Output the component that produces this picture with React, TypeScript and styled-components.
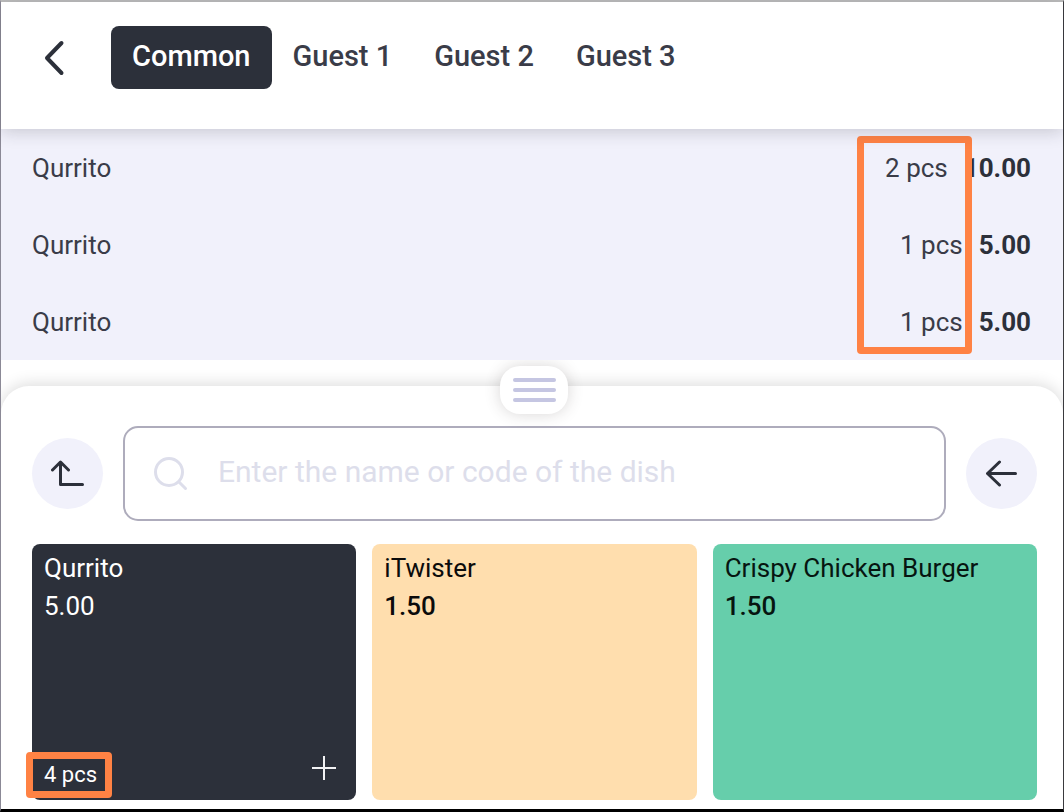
import React, { useState } from "react";
import styled, { createGlobalStyle } from "styled-components";

const ink = "#2c303a";
const softInk = "#3a3c48";
const lilac = "#f1f1fb";
const marker = "#ff8244";

const GlobalStyle = createGlobalStyle`
  *, *::before, *::after { box-sizing: border-box; }
  body { margin: 0; background: #fff; }
  body, button, input { font-family: Roboto, "Liberation Sans", sans-serif; }
  button { border: 0; padding: 0; background: none; color: inherit; cursor: pointer; }
`;

const Screen = styled.main`
  display: flex;
  flex-direction: column;
  min-height: 100vh;
  border-style: solid;
  border-width: 2px 1px 3px;
  border-color: #bdbdbd #3a3a3e #000 #8b8996;
  background: #fff;
  color: ${ink};
`;

const Header = styled.header`
  position: relative;
  z-index: 1;
  display: flex;
  align-items: flex-start;
  gap: 34px;
  height: 127px;
  padding: 24px 32px;
  background: #fff;
  box-shadow: 0 3px 16px rgba(40, 40, 50, 0.2);
`;

const BackButton = styled.button`
  display: grid;
  place-items: center;
  width: 44px;
  height: 63px;
`;

const Tabs = styled.nav`
  display: flex;
`;

const Tab = styled.button<{ $active: boolean }>`
  height: 63px;
  padding: 0 21px 4px;
  border-radius: 8px;
  background: ${(p) => (p.$active ? ink : "transparent")};
  color: ${(p) => (p.$active ? "#fff" : softInk)};
  font-size: 29px;
  font-weight: 500;
  line-height: 36px;
`;

const Order = styled.section`
  position: relative;
  background: ${lilac};
`;

const OrderTable = styled.table`
  width: 100%;
  border-collapse: collapse;
  color: ${softInk};
  font-size: 26px;
  line-height: 32px;
`;

const OrderRow = styled.tr`
  display: flex;
  align-items: center;
  gap: 16px;
  height: 77px;
  padding: 0 32px 0 31px;
`;

const Name = styled.td`
  flex: 1;
  padding: 0;
`;

const Quantity = styled.td`
  padding: 0;
`;

const Price = styled.td`
  padding: 0;
  color: ${ink};
  font-weight: 700;
`;

const OrderMarker = styled.div`
  position: absolute;
  top: 7px;
  right: 91px;
  bottom: 6px;
  width: 115px;
  border: 7px solid ${marker};
  border-radius: 4px;
  pointer-events: none;
`;

const Menu = styled.section`
  position: relative;
  flex: 1;
  display: flex;
  flex-direction: column;
  gap: 23px;
  margin-top: 26px;
  padding: 40px 26px 9px 31px;
  border-radius: 28px 28px 0 0;
  background: #fff;
  box-shadow: 0 -2px 16px rgba(0, 0, 0, 0.14);
  clip-path: inset(-26px 0 0 0);
`;

const Handle = styled.button`
  position: absolute;
  top: -20px;
  left: 50%;
  display: grid;
  place-content: center;
  gap: 6px;
  width: 68px;
  height: 48px;
  margin-left: -32px;
  border-radius: 20px;
  background: #fff;
  box-shadow: 0 0 16px rgba(60, 50, 50, 0.2);
`;

const Grip = styled.span`
  width: 43px;
  height: 4px;
  border-radius: 2px;
  background: #c5c6e2;
`;

const SearchRow = styled.div`
  display: flex;
  align-items: center;
  gap: 20px;
`;

const RoundButton = styled.button`
  flex: none;
  display: grid;
  place-items: center;
  width: 71px;
  height: 71px;
  border-radius: 50%;
  background: ${lilac};
`;

const SearchBox = styled.label`
  flex: 1;
  display: flex;
  align-items: center;
  gap: 30px;
  min-width: 0;
  height: 95px;
  padding: 0 27px;
  border: 2px solid #aeacbc;
  border-radius: 15px;
`;

const SearchInput = styled.input`
  flex: 1;
  min-width: 0;
  height: 60px;
  padding: 0 0 4px;
  border: 0;
  outline: 0;
  background: none;
  color: ${ink};
  font-size: 30px;
  &::placeholder { color: #dddeeb; opacity: 1; }
`;

const Dishes = styled.div`
  flex: 1;
  display: grid;
  grid-template-columns: repeat(3, 1fr);
  gap: 16px;
  min-height: 256px;
`;

const Dish = styled.button<{ $bg: string; $fg: string; $strong: boolean }>`
  position: relative;
  display: flex;
  flex-direction: column;
  gap: 6px;
  padding: 8px 12px;
  border-radius: 8px;
  background: ${(p) => p.$bg};
  color: ${(p) => p.$fg};
  font-size: 26px;
  line-height: 32px;
  text-align: left;
  strong { font-weight: ${(p) => (p.$strong ? 500 : 400)}; }
`;

const DishFooter = styled.span`
  display: flex;
  align-items: flex-end;
  justify-content: space-between;
  margin-top: auto;
  padding-right: 7px;
`;

const DishCount = styled.span`
  position: relative;
  font-size: 22px;
  line-height: 34px;
  &::after {
    content: "";
    position: absolute;
    inset: -6px -15px -6px -18px;
    border: 7px solid ${marker};
    border-radius: 4px;
  }
`;

const PlusIcon = styled.svg`
  margin-bottom: 11px;
`;

const order = [
  { qty: "2 pcs", price: "10.00" },
  { qty: "1 pcs", price: "5.00" },
  { qty: "1 pcs", price: "5.00" },
];

const dishes = [
  { name: "Qurrito", price: "5.00", bg: ink, fg: "#fff", count: "4 pcs" },
  { name: "iTwister", price: "1.50", bg: "#ffdeae", fg: "#0b0b0b" },
  { name: "Crispy Chicken Burger", price: "1.50", bg: "#66ceab", fg: "#061510" },
];

export default function App() {
  const [tab, setTab] = useState("Common");
  return (
    <Screen>
      <GlobalStyle />
      <Header>
        <BackButton aria-label="Back">
          <svg width="22" height="36" viewBox="0 0 22 36" fill="none" stroke={ink} strokeWidth="4" strokeLinecap="round" strokeLinejoin="round">
            <path d="M17.500 3L3 18L17.500 33" />
          </svg>
        </BackButton>
        <Tabs>
          {["Common", "Guest 1", "Guest 2", "Guest 3"].map((t) => (
            <Tab key={t} $active={t === tab} onClick={() => setTab(t)}>{t}</Tab>
          ))}
        </Tabs>
      </Header>
      <Order>
        <OrderTable>
          <tbody>
            {order.map((o, i) => (
              <OrderRow key={i}>
                <Name>Qurrito</Name>
                <Quantity>{o.qty}</Quantity>
                <Price>{o.price}</Price>
              </OrderRow>
            ))}
          </tbody>
        </OrderTable>
        <OrderMarker />
      </Order>
      <Menu>
        <Handle aria-label="Resize menu">
          <Grip />
          <Grip />
          <Grip />
        </Handle>
        <SearchRow>
          <RoundButton aria-label="Up one level">
            <svg width="34" height="28" viewBox="0 0 34 28" fill="none" stroke={ink} strokeWidth="3" strokeLinecap="round" strokeLinejoin="round">
              <path d="M1.500 10L9.500 2L17.500 10M9.500 2.500V24.500H31.500" />
            </svg>
          </RoundButton>
          <SearchBox>
            <svg width="36" height="36" viewBox="0 0 36 36" fill="none" stroke="#dddeeb" strokeWidth="3" strokeLinecap="round">
              <circle cx="17" cy="16" r="13.500" />
              <path d="M27 26L33.500 32.500" />
            </svg>
            <SearchInput aria-label="Search dishes" placeholder="Enter the name or code of the dish" />
          </SearchBox>
          <RoundButton aria-label="Previous">
            <svg width="32" height="28" viewBox="0 0 32 28" fill="none" stroke={ink} strokeWidth="3" strokeLinecap="round" strokeLinejoin="round">
              <path d="M13.500 2L1.500 13.500L13.500 25M2.500 13.500H29.500" />
            </svg>
          </RoundButton>
        </SearchRow>
        <Dishes>
          {dishes.map((d) => (
            <Dish key={d.name} $bg={d.bg} $fg={d.fg} $strong={!d.count}>
              <span>{d.name}</span>
              <strong>{d.price}</strong>
              {d.count && (
                <DishFooter>
                  <DishCount>{d.count}</DishCount>
                  <PlusIcon width="26" height="26" viewBox="0 0 26 26" stroke="#f2f2f4" strokeWidth="2">
                    <path d="M13 1V25M1 13H25" />
                  </PlusIcon>
                </DishFooter>
              )}
            </Dish>
          ))}
        </Dishes>
      </Menu>
    </Screen>
  );
}
